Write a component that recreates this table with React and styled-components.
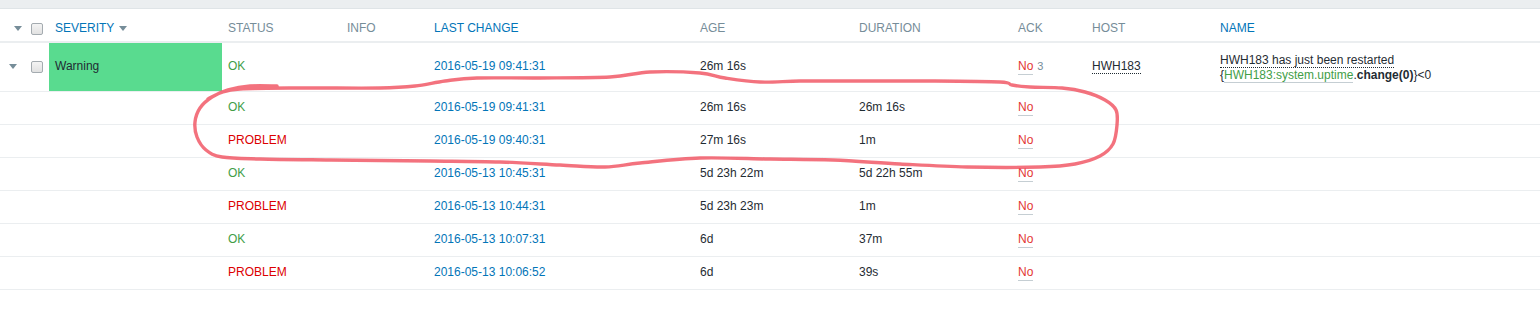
import React from "react";
import styled, { createGlobalStyle } from "styled-components";

const GlobalStyle = createGlobalStyle`
  html, body {
    margin: 0;
    padding: 0;
    background: #ffffff;
  }
  body {
    font-family: "Liberation Sans", Arial, sans-serif;
    font-size: 12px;
    color: #1f2c33;
  }
`;

const Page = styled.div`
  position: relative;
  width: 1540px;
  height: 326px;
  overflow: hidden;
  background: #ffffff;
`;

const TopStrip = styled.div`
  height: 8px;
  background: #ebeef0;
  border-bottom: 1px solid #dfe4e7;
`;

const Table = styled.table`
  width: 1540px;
  table-layout: fixed;
  border-collapse: collapse;
`;

const Col = styled.col`
  width: ${({ $w }) => $w}px;
`;

const HeadRow = styled.tr`
  height: 33px;
  border-bottom: 2px solid #ebeef0;
`;

const Th = styled.th`
  padding: 0 6px 6px;
  vertical-align: bottom;
  text-align: left;
  font-weight: normal;
  font-size: 12px;
  line-height: 14px;
  text-transform: uppercase;
  white-space: nowrap;
  color: ${({ $sort }) => ($sort ? "#0275b8" : "#768d99")};
`;

const Row = styled.tr`
  height: ${({ $main }) => ($main ? 49 : 33)}px;
  border-bottom: 1px solid #ebeef0;
`;

const Td = styled.td`
  padding: 0 6px;
  vertical-align: middle;
  white-space: nowrap;
  line-height: 15px;
  background: ${({ $bg }) => $bg || "transparent"};
`;

const ToggleCell = styled.td`
  padding: 0 0 0 9px;
  vertical-align: ${({ $head }) => ($head ? "bottom" : "middle")};
  padding-bottom: ${({ $head }) => ($head ? "6px" : "3px")};
`;

const CheckCell = styled(ToggleCell)`
  padding-left: 5px;
  padding-bottom: ${({ $head }) => ($head ? "6px" : "0")};
`;

const Caret = styled.span`
  display: inline-block;
  width: 0;
  height: 0;
  border-left: 4px solid transparent;
  border-right: 4px solid transparent;
  border-top: 5px solid #768d99;
  vertical-align: middle;
  margin-left: ${({ $gap }) => $gap || 0}px;
`;

const Check = styled.span`
  display: block;
  width: 10px;
  height: 10px;
  border: 1px solid #a4abb0;
  border-radius: 2px;
  background: linear-gradient(#f4f4f4, #e1e1e1);
`;

const Status = styled.span`
  color: ${({ $ok }) => ($ok ? "#429e47" : "#dc0000")};
`;

const DateLink = styled.span`
  color: #0275b8;
`;

const Ack = styled.span`
  color: #e33734;
  border-bottom: 1px solid #c5ced3;
  padding-bottom: 1px;
`;

const AckCount = styled.span`
  color: #768d99;
  font-size: 11px;
  margin-left: 4px;
`;

const Dotted = styled.span`
  border-bottom: 1px dotted #1f2c33;
`;

const NameLines = styled.div`
  display: flex;
  flex-direction: column;
  line-height: 15px;
  padding-top: 2px;
`;

const ItemKey = styled.span`
  color: #429e47;
  border-bottom: 1px solid #c5ced3;
`;

const Bold = styled.b`
  font-weight: bold;
`;

const Marker = styled.svg`
  position: absolute;
  top: 0;
  left: 0;
  pointer-events: none;
`;

const columns = [26, 23, 173, 119, 87, 266, 159, 159, 74, 128, 326];

const history = [
  { ok: true, time: "2016-05-19 09:41:31", age: "26m 16s", dur: "26m 16s" },
  { ok: false, time: "2016-05-19 09:40:31", age: "27m 16s", dur: "1m" },
  { ok: true, time: "2016-05-13 10:45:31", age: "5d 23h 22m", dur: "5d 22h 55m" },
  { ok: false, time: "2016-05-13 10:44:31", age: "5d 23h 23m", dur: "1m" },
  { ok: true, time: "2016-05-13 10:07:31", age: "6d", dur: "37m" },
  { ok: false, time: "2016-05-13 10:06:52", age: "6d", dur: "39s" },
];

// hand-drawn loop around the two latest events
const loop = [
  [277, 86], [250, 86], [228, 90], [212, 97], [200, 108], [195, 122], [197, 137],
  [206, 150], [222, 157], [260, 159], [330, 160], [430, 161], [500, 162], [560, 165],
  [605, 167], [640, 163], [700, 158], [770, 159], [833, 160], [900, 164], [967, 167],
  [1040, 167], [1075, 164], [1100, 156], [1113, 144], [1117, 125], [1116, 110],
  [1105, 100], [1085, 92], [1062, 88], [1030, 87], [1012, 85], [1000, 82], [930, 81],
  [850, 81], [800, 81], [760, 82], [725, 78], [700, 73], [650, 72], [610, 77],
  [540, 78], [477, 78], [445, 81], [415, 86], [380, 88], [300, 88], [240, 89],
  [220, 93], [208, 99],
];

const smooth = (pts) => {
  let d = `M ${pts[0][0]} ${pts[0][1]}`;
  for (let i = 0; i < pts.length - 1; i++) {
    const p0 = pts[i - 1] || pts[i];
    const p1 = pts[i];
    const p2 = pts[i + 1];
    const p3 = pts[i + 2] || p2;
    const c1 = [p1[0] + (p2[0] - p0[0]) / 6, p1[1] + (p2[1] - p0[1]) / 6];
    const c2 = [p2[0] - (p3[0] - p1[0]) / 6, p2[1] - (p3[1] - p1[1]) / 6];
    d += ` C ${c1[0]} ${c1[1]} ${c2[0]} ${c2[1]} ${p2[0]} ${p2[1]}`;
  }
  return d;
};

const App = () => {
  return (
    <Page>
      <GlobalStyle />
      <TopStrip />
      <Table>
        <colgroup>
          {columns.map((w, i) => (
            <Col key={i} $w={w} />
          ))}
        </colgroup>
        <thead>
          <HeadRow>
            <ToggleCell as="th" $head>
              <Caret />
            </ToggleCell>
            <CheckCell as="th" $head>
              <Check />
            </CheckCell>
            <Th $sort>
              Severity
              <Caret $gap={5} />
            </Th>
            <Th>Status</Th>
            <Th>Info</Th>
            <Th $sort>Last change</Th>
            <Th>Age</Th>
            <Th>Duration</Th>
            <Th>Ack</Th>
            <Th>Host</Th>
            <Th $sort>Name</Th>
          </HeadRow>
        </thead>
        <tbody>
          <Row $main>
            <ToggleCell>
              <Caret />
            </ToggleCell>
            <CheckCell>
              <Check />
            </CheckCell>
            <Td $bg="#59db8f">Warning</Td>
            <Td>
              <Status $ok>OK</Status>
            </Td>
            <Td />
            <Td>
              <DateLink>2016-05-19 09:41:31</DateLink>
            </Td>
            <Td>26m 16s</Td>
            <Td />
            <Td>
              <Ack>No</Ack>
              <AckCount>3</AckCount>
            </Td>
            <Td>
              <Dotted>HWH183</Dotted>
            </Td>
            <Td>
              <NameLines>
                <span>
                  <Dotted>HWH183 has just been restarted</Dotted>
                </span>
                <span>
                  {"{"}
                  <ItemKey>HWH183:system.uptime</ItemKey>.<Bold>change(0)</Bold>
                  {"}<0"}
                </span>
              </NameLines>
            </Td>
          </Row>
          {history.map((h, i) => (
            <Row key={i}>
              <Td />
              <Td />
              <Td />
              <Td>
                <Status $ok={h.ok}>{h.ok ? "OK" : "PROBLEM"}</Status>
              </Td>
              <Td />
              <Td>
                <DateLink>{h.time}</DateLink>
              </Td>
              <Td>{h.age}</Td>
              <Td>{h.dur}</Td>
              <Td>
                <Ack>No</Ack>
              </Td>
              <Td />
              <Td />
            </Row>
          ))}
        </tbody>
      </Table>
      <Marker width="1540" height="326" viewBox="0 0 1540 326">
        <defs>
          <filter id="soft" x="-5%" y="-20%" width="110%" height="140%">
            <feGaussianBlur stdDeviation="0.7" />
          </filter>
        </defs>
        <path
          d={smooth(loop)}
          fill="none"
          stroke="#f0505e"
          strokeOpacity="0.8"
          strokeWidth="3.4"
          strokeLinecap="round"
          strokeLinejoin="round"
          filter="url(#soft)"
        />
      </Marker>
    </Page>
  );
};

export default App;
